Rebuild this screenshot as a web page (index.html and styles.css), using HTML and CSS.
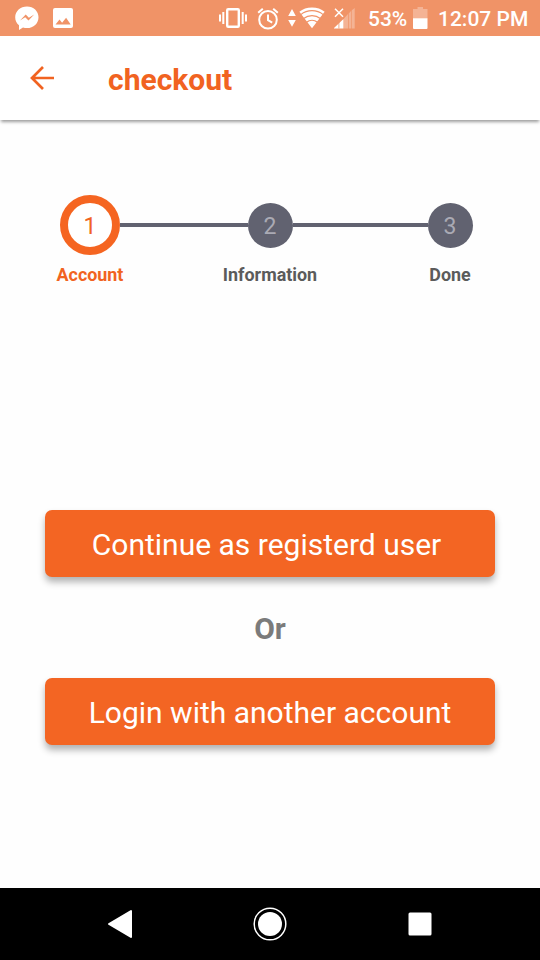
FILE: index.html
```html
<!DOCTYPE html>
<html lang="en">
<head>
<meta charset="utf-8">
<title>checkout</title>
<link rel="stylesheet" href="styles.css">
</head>
<body>
<div class="status">
  <div class="notifications">
    <svg class="messenger" width="24" height="25" viewBox="0 0 24 25"><path fill="#fff" d="M12 .5C5.400.5.2 5.200.2 11.200c0 3.300 1.400 6.200 3.800 8.100v4.600l4-2.300c1.300.4 2.600.5 4 .5 6.500 0 11.500-4.800 11.500-10.900S18.500.5 12 .5z"/><path fill="#f09367" d="m5 14.500 5.700-6 3.200 3.200 5.300-3.200-5.700 6-3.300-3.200z"/></svg>
    <svg width="20" height="20" viewBox="0 0 20 20"><path fill="#fff" d="M2 0h16a2 2 0 0 1 2 2v16a2 2 0 0 1-2 2H2a2 2 0 0 1-2-2V2a2 2 0 0 1 2-2z"/><path fill="#f09367" d="m2.500 16.500 4-5 2.600 3.200 4-5 4.600 6.800z"/></svg>
  </div>
  <div class="indicators">
    <svg class="vibrate" width="28" height="22" viewBox="0 0 28 22" fill="none" stroke="#fff"><rect x="8.200" y="2.200" width="11.600" height="17.600" rx="1" stroke-width="2.400"/><path stroke-width="2" d="M1 7.500v7M4.300 5v12M23.700 5v12M27 7.500v7"/></svg>
    <svg class="alarm" width="22" height="23" viewBox="0 0 22 23" fill="none" stroke="#fff" stroke-width="2"><circle cx="11" cy="12.700" r="8.800"/><path d="M11 7.500v5.600l4.200 2.600M1.200 5.700l4.600-4M20.800 5.700l-4.600-4"/></svg>
    <svg class="data" width="8" height="18" viewBox="0 0 8 18" fill="#fff"><path d="M4 0l3.800 7H.2zM4 17.700.2 11h7.600z"/></svg>
    <svg class="wifi" width="26" height="22" viewBox="0 0 26 22"><path fill="#fff" d="M13 .5C8 .5 3.700 2.100.4 4.700L13 21.200 25.600 4.700C22.300 2.100 18 .5 13 .5z"/><g fill="none" stroke="#f09367" stroke-width="1.200"><path d="M1.800 7.600a18 18 0 0 1 22.400 0M4.600 11.500a14 14 0 0 1 16.800 0M7.500 15.300a9 9 0 0 1 11 0"/></g></svg>
    <svg class="signal" width="21" height="21" viewBox="0 0 21 21"><path fill="#fff" fill-opacity=".3" d="M10 10.500l4-4.500v14.500h-4zM14.700 5.500l2.500-2.800v17.800h-2.500zM17.800 2.200 20.700 0v20.500h-2.900z"/><path fill="#fff" d="M0 20.500v-.5L9.500 11v9.500z"/><path stroke="#f09367" stroke-width=".8" d="M4.900 12v8.500"/><path stroke="#fff" stroke-width="1.500" d="m1 .7 8 8m0-8-8 8"/></svg>
    <span class="percent">53%</span>
    <svg class="battery" width="15" height="22" viewBox="0 0 15 22"><path fill="#fff" fill-opacity=".3" d="M4.500 0h5.500v2H14.500v9.500H0V2h4.500z"/><path fill="#fff" d="M0 11.300h14.500v9.700a1 1 0 0 1-1 1H1a1 1 0 0 1-1-1z"/></svg>
    <span class="time">12:07 PM</span>
  </div>
</div>
<header class="appbar">
  <svg width="24" height="24" viewBox="0 0 24 24" fill="none" stroke="#f16321" stroke-width="2.700"><path d="M24 12H2M13 1 2 12l11 11"/></svg>
  <h1>checkout</h1>
</header>
<main>
  <div class="track">
    <div class="dot current">1</div><div class="line first"></div>
    <div class="dot">2</div><div class="line"></div>
    <div class="dot">3</div>
  </div>
  <div class="labels"><span class="active">Account</span><span>Information</span><span>Done</span></div>
  <div class="choices">
    <button class="registered">Continue as registerd user</button>
    <p>Or</p>
    <button>Login with another account</button>
  </div>
</main>
<nav class="navbar">
  <svg width="26" height="30" viewBox="0 0 26 30"><path fill="#fff" stroke="#fff" stroke-width="2" stroke-linejoin="round" d="M24 2v26L2 15z"/></svg>
  <svg width="34" height="34" viewBox="0 0 34 34"><circle cx="17" cy="17" r="15.800" fill="none" stroke="#fff" stroke-width="1.500"/><circle cx="17" cy="17" r="12" fill="#fff"/></svg>
  <svg width="24" height="24" viewBox="0 0 24 24"><rect x=".5" y=".5" width="23" height="23" rx="1.500" fill="#fff"/></svg>
</nav>
</body>
</html>
```
FILE: styles.css
```css
* { box-sizing: border-box; }
body {
  margin: 0;
  width: 540px;
  height: 960px;
  display: flex;
  flex-direction: column;
  overflow: hidden;
  background: #fefefe;
  font-family: Roboto, "Liberation Sans", sans-serif;
}
svg { display: block; flex: none; }
.status {
  height: 36px;
  flex: none;
  display: flex;
  justify-content: space-between;
  padding: 0 12px 0 15px;
  background: #f09367;
  color: #fff;
}
.notifications, .indicators { display: flex; align-items: center; }
.notifications { gap: 14px; }
.alarm { margin-left: 10px; }
.data { margin-left: 9px; }
.wifi { margin-left: 3px; }
.signal { margin-left: 9px; }
.percent, .time {
  font-size: 21px;
  font-weight: 500;
  line-height: 36px;
  padding-top: 2px;
  white-space: nowrap;
}
.percent { width: 39px; margin-left: 13px; }
.battery { margin-left: 6px; }
.time { width: 90px; margin-left: 10px; }
.appbar {
  height: 84px;
  flex: none;
  display: flex;
  align-items: center;
  gap: 54px;
  padding-left: 30px;
  background: #fff;
  box-shadow: 0 3px 3px -1px rgba(0, 0, 0, .38);
}
h1 {
  margin: 0;
  padding-top: 3px;
  font-size: 30px;
  font-weight: 700;
  line-height: 36px;
  color: #f16321;
}
main { flex: 1; padding-top: 75px; }
.track {
  height: 60px;
  display: flex;
  align-items: center;
  padding: 0 67.5px 0 60px;
}
.dot {
  width: 45px;
  height: 45px;
  flex: none;
  display: flex;
  align-items: center;
  justify-content: center;
  border-radius: 50%;
  background: #616270;
  color: #aaaab4;
  font-size: 23px;
  padding-top: 2px;
}
.dot.current {
  width: 60px;
  height: 60px;
  border: 8px solid #f56521;
  background: #fff;
  color: #f16321;
}
.line { flex: 1; height: 4.500px; background: #616270; }
.line.first { flex: 0 0 127.500px; }
.labels {
  display: grid;
  grid-template-columns: repeat(3, 180px);
  padding-top: 9px;
  text-align: center;
  font-size: 17.900px;
  font-weight: 700;
  line-height: 22px;
  color: #5b5b5b;
}
.labels .active { color: #f16321; }
.choices { padding: 224px 45px 0; }
button {
  display: block;
  width: 100%;
  height: 67px;
  padding: 2px 0 0;
  border: 0;
  border-radius: 7px;
  background: #f36523;
  box-shadow: 0 5px 7px rgba(0, 0, 0, .3);
  color: #fff;
  font: 400 30px/36px Roboto, "Liberation Sans", sans-serif;
  white-space: nowrap;
}
.registered { padding-right: 7px; }
p {
  margin: 0;
  padding-top: 1px;
  line-height: 101px;
  text-align: center;
  font-size: 30px;
  font-weight: 700;
  color: #7b7b7b;
  height: 101px;
}
.navbar {
  height: 72px;
  flex: none;
  display: grid;
  grid-template-columns: repeat(3, 150px);
  padding: 0 45px;
  align-items: center;
  justify-items: center;
  background: #000;
}
```
